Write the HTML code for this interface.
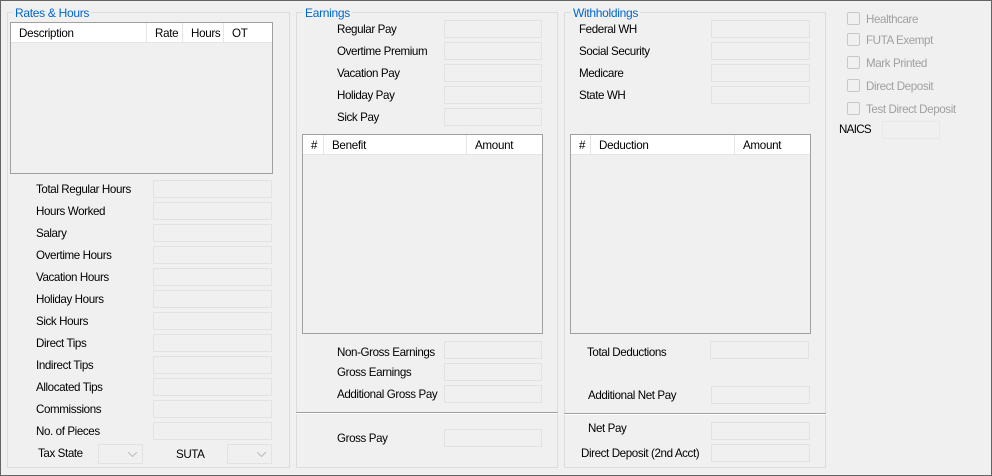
<!DOCTYPE html>
<html><head><style>
*{margin:0;padding:0;box-sizing:border-box}
body{width:992px;height:476px;background:#f0f0f0;font-family:"Liberation Sans",sans-serif;font-size:12px;color:#000;position:relative;overflow:hidden}
#frame{position:absolute;left:0;top:0;width:992px;height:476px;border:1px solid #646464}
.g{position:absolute;border:1px solid #dcdcdc}
.t{position:absolute;color:#0066cc;background:#f0f0f0;padding:0 2px;line-height:14px;letter-spacing:-0.3px}
.l{position:absolute;line-height:14px;white-space:nowrap;letter-spacing:-0.4px;font-size:11.6px;margin-top:1px}
.b{position:absolute;height:18px;border:1px solid #e2e2e2;background:#f0f0f0}
.lv{position:absolute;border:1px solid #a0a0a0;background:#f0f0f0}
.hd{position:absolute;top:0;height:20px;background:#fff;border-bottom:1px solid #e5e5e5;line-height:21px;padding-left:8px;border-right:1px solid #e5e5e5;letter-spacing:-0.3px;font-size:11.6px}
.sep{position:absolute;height:2px;background:#a0a0a0;border-bottom:1px solid #fff}
.cb{position:absolute;width:13px;height:13px;border:1px solid #c8c8c8;border-radius:2px;background:#f0f0f0}
.cl{position:absolute;color:#a0a0a0;line-height:14px;letter-spacing:-0.4px;font-size:11.6px;margin-top:1px}
.combo{position:absolute;height:20px;border:1px solid #e2e2e2;background:#f0f0f0}
.combo svg{position:absolute;right:5px;top:7px}
</style></head><body>
<div id="frame"></div>

<!-- Rates & Hours -->
<div class="g" style="left:7px;top:12px;width:283px;height:456px"></div>
<div class="t" style="left:13px;top:6px">Rates &amp; Hours</div>
<div class="lv" style="left:10px;top:22px;width:263px;height:152px">
 <div class="hd" style="left:0;width:136px">Description</div>
 <div class="hd" style="left:136px;width:36px">Rate</div>
 <div class="hd" style="left:172px;width:41px">Hours</div>
 <div class="hd" style="left:213px;width:48px;border-right:none">OT</div>
</div>
<div class="l" style="left:36px;top:182px">Total Regular Hours</div>
<div class="l" style="left:36px;top:204px">Hours Worked</div>
<div class="l" style="left:36px;top:226px">Salary</div>
<div class="l" style="left:36px;top:248px">Overtime Hours</div>
<div class="l" style="left:36px;top:270px">Vacation Hours</div>
<div class="l" style="left:36px;top:292px">Holiday Hours</div>
<div class="l" style="left:36px;top:314px">Sick Hours</div>
<div class="l" style="left:36px;top:336px">Direct Tips</div>
<div class="l" style="left:36px;top:358px">Indirect Tips</div>
<div class="l" style="left:36px;top:380px">Allocated Tips</div>
<div class="l" style="left:36px;top:402px">Commissions</div>
<div class="l" style="left:36px;top:424px">No. of Pieces</div>
<div class="b" style="left:153px;top:180px;width:119px"></div>
<div class="b" style="left:153px;top:202px;width:119px"></div>
<div class="b" style="left:153px;top:224px;width:119px"></div>
<div class="b" style="left:153px;top:246px;width:119px"></div>
<div class="b" style="left:153px;top:268px;width:119px"></div>
<div class="b" style="left:153px;top:290px;width:119px"></div>
<div class="b" style="left:153px;top:312px;width:119px"></div>
<div class="b" style="left:153px;top:334px;width:119px"></div>
<div class="b" style="left:153px;top:356px;width:119px"></div>
<div class="b" style="left:153px;top:378px;width:119px"></div>
<div class="b" style="left:153px;top:400px;width:119px"></div>
<div class="b" style="left:153px;top:422px;width:119px"></div>
<div class="l" style="left:38px;top:446px">Tax State</div>
<div class="combo" style="left:98px;top:444px;width:45px"><svg width="9" height="5"><path d="M0 0L4.5 4.5L9 0" fill="none" stroke="#bbb"/></svg></div>
<div class="l" style="left:176px;top:447px">SUTA</div>
<div class="combo" style="left:227px;top:444px;width:45px"><svg width="9" height="5"><path d="M0 0L4.5 4.5L9 0" fill="none" stroke="#bbb"/></svg></div>

<!-- Earnings -->
<div class="g" style="left:296px;top:12px;width:262px;height:456px"></div>
<div class="t" style="left:303px;top:6px">Earnings</div>
<div class="l" style="left:337px;top:22px">Regular Pay</div>
<div class="l" style="left:337px;top:44px">Overtime Premium</div>
<div class="l" style="left:337px;top:66px">Vacation Pay</div>
<div class="l" style="left:337px;top:88px">Holiday Pay</div>
<div class="l" style="left:337px;top:110px">Sick Pay</div>
<div class="b" style="left:444px;top:20px;width:98px"></div>
<div class="b" style="left:444px;top:42px;width:98px"></div>
<div class="b" style="left:444px;top:64px;width:98px"></div>
<div class="b" style="left:444px;top:86px;width:98px"></div>
<div class="b" style="left:444px;top:108px;width:98px"></div>
<div class="lv" style="left:302px;top:134px;width:241px;height:200px">
 <div class="hd" style="left:0;width:21px">#</div>
 <div class="hd" style="left:21px;width:143px">Benefit</div>
 <div class="hd" style="left:164px;width:75px;border-right:none">Amount</div>
</div>
<div class="l" style="left:337px;top:345px">Non-Gross Earnings</div>
<div class="l" style="left:337px;top:365px">Gross Earnings</div>
<div class="l" style="left:337px;top:387px">Additional Gross Pay</div>
<div class="b" style="left:444px;top:341px;width:98px"></div>
<div class="b" style="left:444px;top:363px;width:98px"></div>
<div class="b" style="left:444px;top:385px;width:98px"></div>
<div class="sep" style="left:296px;top:412px;width:262px"></div>
<div class="l" style="left:337px;top:431px">Gross Pay</div>
<div class="b" style="left:444px;top:429px;width:98px"></div>

<!-- Withholdings -->
<div class="g" style="left:564px;top:12px;width:262px;height:456px"></div>
<div class="t" style="left:571px;top:6px">Withholdings</div>
<div class="l" style="left:579px;top:22px">Federal WH</div>
<div class="l" style="left:579px;top:44px">Social Security</div>
<div class="l" style="left:579px;top:66px">Medicare</div>
<div class="l" style="left:579px;top:88px">State WH</div>
<div class="b" style="left:711px;top:20px;width:99px"></div>
<div class="b" style="left:711px;top:42px;width:99px"></div>
<div class="b" style="left:711px;top:64px;width:99px"></div>
<div class="b" style="left:711px;top:86px;width:99px"></div>
<div class="lv" style="left:570px;top:134px;width:241px;height:200px">
 <div class="hd" style="left:0;width:20px">#</div>
 <div class="hd" style="left:20px;width:144px">Deduction</div>
 <div class="hd" style="left:164px;width:75px;border-right:none">Amount</div>
</div>
<div class="l" style="left:587px;top:345px">Total Deductions</div>
<div class="l" style="left:588px;top:388px">Additional Net Pay</div>
<div class="b" style="left:710px;top:341px;width:99px"></div>
<div class="b" style="left:711px;top:386px;width:99px"></div>
<div class="sep" style="left:564px;top:413px;width:262px"></div>
<div class="l" style="left:588px;top:421px">Net Pay</div>
<div class="l" style="left:581px;top:446px">Direct Deposit (2nd Acct)</div>
<div class="b" style="left:711px;top:422px;width:99px"></div>
<div class="b" style="left:711px;top:444px;width:99px"></div>

<!-- Checkboxes -->
<div class="cb" style="left:847px;top:12px"></div><div class="cl" style="left:866px;top:12px">Healthcare</div>
<div class="cb" style="left:847px;top:33px"></div><div class="cl" style="left:866px;top:33px">FUTA Exempt</div>
<div class="cb" style="left:847px;top:56px"></div><div class="cl" style="left:866px;top:56px">Mark Printed</div>
<div class="cb" style="left:847px;top:79px"></div><div class="cl" style="left:866px;top:79px">Direct Deposit</div>
<div class="cb" style="left:847px;top:102px"></div><div class="cl" style="left:866px;top:102px">Test Direct Deposit</div>
<div class="l" style="left:839px;top:122px;letter-spacing:-0.7px">NAICS</div>
<div class="b" style="left:882px;top:121px;width:58px;border-color:#e8e8e8"></div>
</body></html>
